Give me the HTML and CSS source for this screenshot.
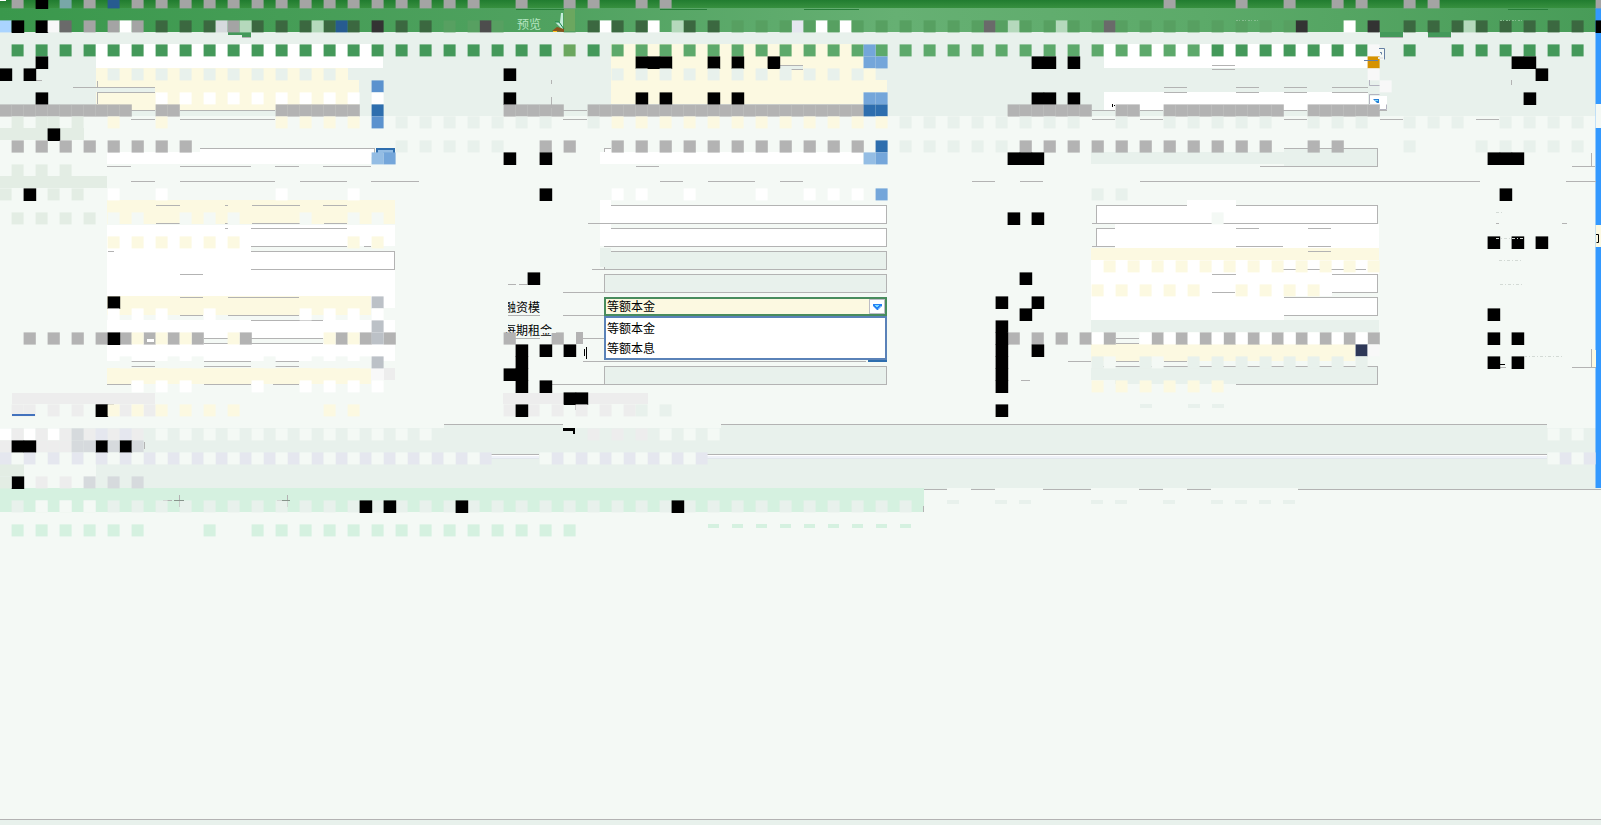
FILE: index.html
```html
<!DOCTYPE html>
<html lang="zh-CN">
<head>
<meta charset="utf-8">
<title>预览</title>
<link rel="stylesheet" href="styles.css">
</head>
<body>
<div class="window">
  <header class="titlebar"></header>
  <nav class="menubar"><span class="menu-item">预览</span></nav>
  <section class="summary"></section>
  <main class="form">
    <div class="row"><span class="label"></span><div class="field"></div><div class="field right"></div></div>
    <div class="row"><span class="label"></span><div class="field"></div><div class="field right"></div></div>
    <div class="row"><span class="label"></span><div class="field readonly"></div></div>
    <div class="row"><span class="label"></span><div class="field readonly"></div><div class="field right"></div></div>
    <div class="row"><span class="label">融资模</span><div class="field select"><span>等额本金</span><i class="arrow"><svg width="9" height="6" viewBox="0 0 9 6"><path d="M0 0h9v2L5 6H4L0 2z" fill="#2580f5"/><path d="M2 1h4v1H5v1H3V2H2z" fill="#7bdcff"/><path d="M8 2v1L5 6V5z" fill="#b8e7ff"/></svg></i></div><div class="field right"></div></div>
    <div class="row"><span class="label">每期租金</span><div class="anchor"><ul class="options"><li>等额本金</li><li>等额本息</li></ul></div></div>
    <div class="row"></div>
    <div class="row"><span class="label"></span><div class="field readonly"></div><div class="field right readonly"></div></div>
  </main>
  <div class="tabs"></div>
  <div class="toolbar"></div>
  <section class="list"></section>
  <footer class="status"></footer>
  <svg class="mosaic" width="1601" height="825" viewBox="0 0 1601 825"></svg>
</div>
<script src="mosaic.js"></script>
</body>
</html>
```
FILE: styles.css
```css
* { box-sizing: border-box; }
body { margin: 0; overflow: hidden; font: 12px/14px "Liberation Sans", "Noto Sans CJK SC", sans-serif; color: #000; }
.window { position: relative; display: flex; flex-direction: column; width: 1601px; height: 825px; background: #f4f9f5; }
.titlebar { flex: 0 0 8px; background: linear-gradient(#217c30, #37903f); }
.menubar { flex: 0 0 24px; padding: 10px 0 0 517px; background: linear-gradient(90deg, #3a984c, #50a260 35%, #66b073 56%, #5caa69 75%, #489c58); }
.menu-item { color: #b5e5c1; }
.summary { flex: 0 0 84px; background: #e8f1ec; }
.form { flex: 0 0 308px; display: flex; flex-direction: column; gap: 4px; padding: 89px 0 0 504px; }
.row { display: flex; height: 19px; }
.label { width: 100px; padding-top: 4px; white-space: nowrap; }
.field { width: 283px; height: 19px; border: 1px solid #b3b3b3; background: #fff; }
.right { margin-left: 209px; width: 282px; }
.readonly { background: #e8f1ec; }
.select { display: flex; justify-content: space-between; border: 2px solid #488c5d; background: #fcf9e1; padding-left: 1px; line-height: 16px; }
.arrow { display: flex; align-items: center; justify-content: center; width: 16px; height: 15px; border: 1px solid #bdbdc5; background: #fff; }
.anchor { position: relative; width: 283px; }
.options { position: absolute; z-index: 3; top: -4px; left: 0; width: 283px; height: 44px; margin: 0; padding: 3px 0; list-style: none; border: 2px solid #5a82b8; background: #fff; }
.options li { height: 20px; line-height: 17px; padding-left: 1px; }
.tabs { flex: 0 0 30px; border-top: 1px solid #b3b3b3; background: #e8f1ec; }
.toolbar { flex: 0 0 36px; border-top: 1px solid #b3b3b3; border-bottom: 1px solid #b3b3b3; background: linear-gradient(#fff 1px, #eef1f8 1px 3px, #e2e7ec 3px 4px, #e8f1ec 4px); }
.list { flex: 1; }
.status { flex: 0 0 6px; border-top: 1px solid #b3b3b3; background: #e8f1ec; }
.mosaic { position: absolute; top: 0; left: 0; z-index: 2; pointer-events: none; }
```
FILE: mosaic.js
```js
const NS = 'http://www.w3.org/2000/svg';
const svg = document.querySelector('.mosaic');
const C = {
  k: '#000', w: '#fff', y: '#fcf9e1', b: '#f4f9f5', e: '#e8f1ec', s: '#e3ede4',
  g: '#b3b3b3', h: '#a4a4a4', n: '#ededed', d: '#d6dadd', l: '#e5e7ef', m: '#d5f1e0',
  q: '#3b6840', t: '#57a061', u: '#74a6da', v: '#2e6eae', x: '#5b92ce', z: '#94bde4',
  c: '#bcc1c7', o: '#d69200', f: '#f8f8f8', a: '#b5d9bc', r: '#3399ff', i: '#44995a', I: '#5da96b',
  p: '#333', j: '#6a6a6a', A: '#aad4ff', B: '#275b90', D: '#4d4d4d', E: '#78a7a7', G: '#6ba75f', N: '#2e3858'
};
function rect(x, y, w, h, fill) {
  const r = document.createElementNS(NS, 'rect');
  r.setAttribute('x', x); r.setAttribute('y', y);
  r.setAttribute('width', w); r.setAttribute('height', h);
  r.setAttribute('fill', fill);
  svg.appendChild(r);
}
// areas: colour, x1, x2, y1, y2
const areas = `
w 96 383 44 68;y 96 348 68 80;y 96 359 80 110;e 73 155 87 92;e 131 155 111 116;e 180 275 111 116
w 107 371 152 164;w 200 374 148 157;v 376 395 148 153;z 378 393 150 153
y 107 395 200 224;w 107 395 225 246;w 107 395 251 269;b 107 251 246 251;w 107 251 246 251;w 107 395 269 296
y 107 371 296 315;w 371 395 296 308;b 180 203 316 320;b 228 299 316 320;w 107 395 320 338;w 107 395 343 361
b 204 251 339 343;b 251 323 339 343;y 107 371 368 384;f 371 384 368 380;n 384 395 368 380
y 611 863 44 104;e 780 803 66 69;y 863 887 80 92;w 600 863 152 164;w 604 611 148 152;w 600 611 200 246;e 600 611 248 267
w 1104 1368 44 68;w 1104 1368 92 110;e 1091 1377 152 164;e 1284 1377 148 166
w 1187 1236 200 212;b 1187 1211 212 223;w 1187 1236 212 223;w 1115 1379 224 248;y 1091 1379 248 260;w 1091 1379 260 274
w 1091 1212 272 292;w 1236 1332 272 296;w 1091 1284 292 320;e 1091 1379 320 332;y 1091 1355 344 361;e 1091 1236 368 380;b 1091 1236 380 386;e 1115 1236 380 384
s 0 84 128 140;s 0 107 176 188;n 12 155 393 404;n 503 648 393 404
b 0 444 423 428;b 563 721 423 428;b 1547 1596 423 428;b 0 12 416 424
e 0 491 453 464;e 539 707 453 464;e 1547 1596 453 464
s 0 24 464 476;b 24 96 464 488;m 0 924 488 512;b 947 971 488 490;b 995 1043 488 490;b 1091 1139 488 490;b 1163 1187 488 490;b 1211 1298 488 490
r 1595.5 1601 8 488;b 1595.5 1601 104 128;y 1595.5 1601 225 247;y 1592 1596 350 367
i 228 242 32 35;i 242 251 32 37;i 1380 1403 32 37;i 1428 1451 32 37
w 1369 1387 96 110;b 1371 1385 48 60`;
areas.trim().split(/[;\n]/).forEach(t => {
  const [c, x1, x2, y1, y2] = t.trim().split(' ');
  rect(+x1, +y1, x2 - x1, y2 - y1, C[c]);
});
// horizontal rules: y: x1-x2 ...
const rules = `37:242-251 1380-1403 1428-1451
65:780-803 1212-1235
69:780-803 1212-1235
80:27-42
87:73-155 1164-1187 1236-1259 1284-1307 1332-1368
92:97-155 1164-1187 1236-1259 1284-1307 1332-1368
110:131-155 180-275 563-587 1092-1115 1140-1163 1283-1307 1368-1387
119:131-155 180-275 563-587 1092-1115 1140-1163 1284-1307 1380-1403 1476-1499
148:200-374 604-611 1284-1377
166:107-131 180-251 275-299 323-371 636-659 1260-1377 1572-1595
181:131-155 180-275 300-347 371-419 660-683 708-755 780-803 972-995 1020-1043 1140-1480 1566-1596
205:156-180 225-228 252-300 323-347
223:156-180 225-228 252-300 324-347 588-611 1092-1097 1496-1499 1562-1567
228:225-228 251-347 1236-1259 1308-1331
246:251-347 364-371 1092-1115 1236-1283 1308-1331
251:108-114 251-395 1308-1331
269:251-395 592-605 1200-1210 1277-1366
274:180-203 1212-1235
284:508-516 519-527
292:563-604 1212-1235
297:180-203 228-299
315:180-203 228-299 508-540 563-604
320:251-323
338:204-228 251-323 508-540 583-604 1116-1139
343:204-229 251-323 1116-1139
361:131-155 204-251 273-299 583-866 1068-1091 1116-1139 1164-1187
366:131-155 204-251 273-299 1116-1139 1164-1187
367:1500-1506 1572-1596
380:1021-1030
384:107-131 204-251 273-299 551-604
404:96-114
500:163-172 175-184 277-287
511:12-20`;
rules.split('\n').forEach(l => {
  const [y, list] = l.split(':');
  list.split(' ').forEach(s => { const [a, b] = s.split('-'); rect(+a, +y, b - a, 1, '#b3b3b3'); });
});
[[97, 81, 6], [97, 92, 12], [374, 148, 5], [394, 251, 18], [551, 80, 4], [551, 97, 11], [604, 148, 4], [1377, 148, 19],
 [1511, 80, 5], [1591, 153, 13], [1591, 349, 18], [179, 495, 12], [287, 495, 12], [144, 442, 7], [923, 506, 6], [575, 396, 14]
].forEach(([x, y, h]) => rect(x, y, 1, h, '#b3b3b3'));
// tiles: row | colour columns (from-to/step) ...
const tiles = `0|h 1 7 11-39/2 43 47 49 53 55 97 103 107 111 113 117 119 133|k 3|E 5|B 9
2|A 0|k 1 3 133|f 4|j 5 82 92|h 7 9 11 19|w 10 50 54 68 70 112|q 13 15 17 21 23 25 27 29 33 35 49 51 53 57 59 117 119 121 123 125 127 129 131|d 18|a 20 26 56 84 88 122|B 28|p 31 108 114|D 40|l 66|t 37 39 41 47 61 63 65 67 69 71-81/2 83-107/2
4|i 1-45/2 49 101-113/2 117 121-131/2|I 51-71/2 73-99/2|G 47|u 72|f 114
5|k 3 53-55 59 61 64 86 87 89 126 127|u 72 73|o 114
6|k 0 2 42 128|e 9-27/2 51-71/2|y 72|f 114
7|x 31|f 115
8|k 3 42 53 55 59 61 86 87 89 127|w 13-29/2 31|u 72 73
9|g 0-10 13-14 23-29 42-46 49-71 84-90 93-94 97-106 109-114|v 31 72 73
10|s 1 3 4 6|y 9 13 23-29/2 51-71/2 73|x 31|e 33-45/2 49 75-89/2 93 97-105/2 109-113/2 117-121/2 125-131/2
11|k 4
12|g 1-15/2 45 47 51-71/2 85-105/2 109 111|v 73|e 33-41/2 75-83/2 117 123-131/2
13|z 31 72|u 32 73|k 42 45 84-86 124-126
14|s 1 3 5
16|s 0 4 6|k 2 45 125|w 9 13 23 29 51 53 57 63 67 69 71|u 73|e 91 93
18|s 1 3 5 7|b 9 11 15 17 19 25 29 31 101|k 84 86
20|y 9-19/2 29 31|k 124 126 128
22|y 92-114/2
23|k 44 85
24|y 91-99/2 103-109/2
25|k 9 83 86|c 31
26|w 9 11 13 17 25 27 29 31|k 85 124
27|c 31|k 83
28|g 2-8/2 10-16/2 20 28 30 32 42 46 84-92/2 96-114/2|w 91 95-113/2|k 9 83 124 126|y 11 13 15 19 27 29|c 31
29|k 43 45 47 83 86|N 113|f 114
30|b 10 14 16 22 26 28 30 92 96|k 43 83 124 126|c 31|e 91 95 99-113/2
31|k 42 43 83
32|w 11 13 15 21 25 27 29 31|k 43 45 83|y 91-101/2
33|k 47 48
34|n 1 2 4 6 10 12 42 44 46 48 50 52|k 8 43 83|y 9-19/2 27 29|e 53 55
36|w 0 2 4|n 1 3 5 7 9 11 49 51 53|d 6|l 8 10|b 13-35/2 55 57 59 129 131
37|n 0 3-5|k 1 2 8 10|d 6 7 9 11
38|l 0-40/2 46-58/2 130 132|b 1-39/2 45-57/2 129 131
40|k 1|n 3 5|d 7 9 11|s 0
42|e 1-75/2|b 3 5 7|k 30 32 38 56
44|m 1-11/2 17 21-47/2`;
tiles.split('\n').forEach(l => {
  const [row, ...groups] = l.split('|');
  groups.forEach(gr => {
    const [c, ...cols] = gr.split(' ');
    const extra = c === 'k' ? 0.6 : c === 'g' ? 0.2 : 0;
    cols.forEach(s => {
      const [, a, b, st] = s.match(/^(\d+)(?:-(\d+))?(?:\/(\d+))?$/);
      for (let i = +a; i <= +(b || a); i += +(st || 1)) rect(i * 12 - 0.4, row * 12 - 3.6, 12 + extra, 12 + extra, C[c]);
    });
  });
});
// partial tiles and small marks
rect(576, 332, 7, 12, C.g);
rect(504, 301, 4, 14, C.b);
rect(504, 320, 4, 12, C.b);
rect(540, 330, 16, 3, C.b);
rect(563, 428, 12, 3, C.k); rect(573, 431, 2, 3, C.k);
rect(584, 349, 1, 7, C.k); rect(586, 347, 1, 12, C.k);
rect(12, 414, 23, 2, '#4272bd');
rect(868, 359, 19, 3, C.v);
rect(0, 0, 6, 1, '#fff');
[59, 61, 63, 65, 67, 69, 71, 73, 75].forEach(c => rect(c * 12, 524, 11, 4, C.m));
[79, 83, 85, 91, 93, 97, 101, 103, 105, 107].forEach(c => rect(c * 12 - 1, 500, 12, 4, C.e));
[95, 99, 101].forEach(c => rect(c * 12, 404, 12, 4, C.e));
[[516, 9, 48], [660, 9, 47], [804, 9, 55], [1508, 9, 40]].forEach(([x, y, w]) => rect(x, y, w, 1, '#287e3a'));
function path(d, fill, stroke) {
  const p = document.createElementNS(NS, 'path');
  p.setAttribute('d', d); p.setAttribute('fill', fill);
  if (stroke) p.setAttribute('stroke', stroke);
  svg.appendChild(p);
}
rect(564, 9, 11, 22, C.G);
path('M555 22h5l1-9h2v16h-1z', '#c5eddb');
path('M555 22h4l5 7', 'none', '#17844b');
path('M552 31l5-4 7 2v3z', '#8b531d');
rect(553, 31, 4, 1, '#ffbf20');
path('M1379 48.5h5.500v11M1380 52.500h1.500v2M1364 60.500h14', 'none', '#657fa3');
rect(1378, 57, 5, 2, '#e8e8e8');
path('M1369.500 80v5.500h10M1369.500 104V94.500h10M1380 109.500h6.500v-5', 'none', '#b3b3bf');
path('M1373 99h6v4h-2z', '#2580d5');
rect(1375, 100, 3, 1, '#7bdcff');
rect(1112, 104, 1, 3, '#000'); rect(1114, 105, 1, 1, '#000');
rect(147, 339, 7, 3, '#fff');
path('M1596 234.500h2.500v8h-2', 'none', '#000');
path('M174 500.500h10M282 500.500h8', 'none', '#88958c');
path('M1499 364.500h6', 'none', '#000');
path('M1496 212.500h6M1496 238.500h28M1499 260.500h24M1524 356.500h38M1500 284.500h24', 'none', '#d3dad5');
svg.lastChild.setAttribute('stroke-dasharray', '3 2 1 2');
path('M1236 20.500h24M1500 20.500h24', 'none', '#85bd8e');
svg.lastChild.setAttribute('stroke-dasharray', '2 1 1 2');
```
